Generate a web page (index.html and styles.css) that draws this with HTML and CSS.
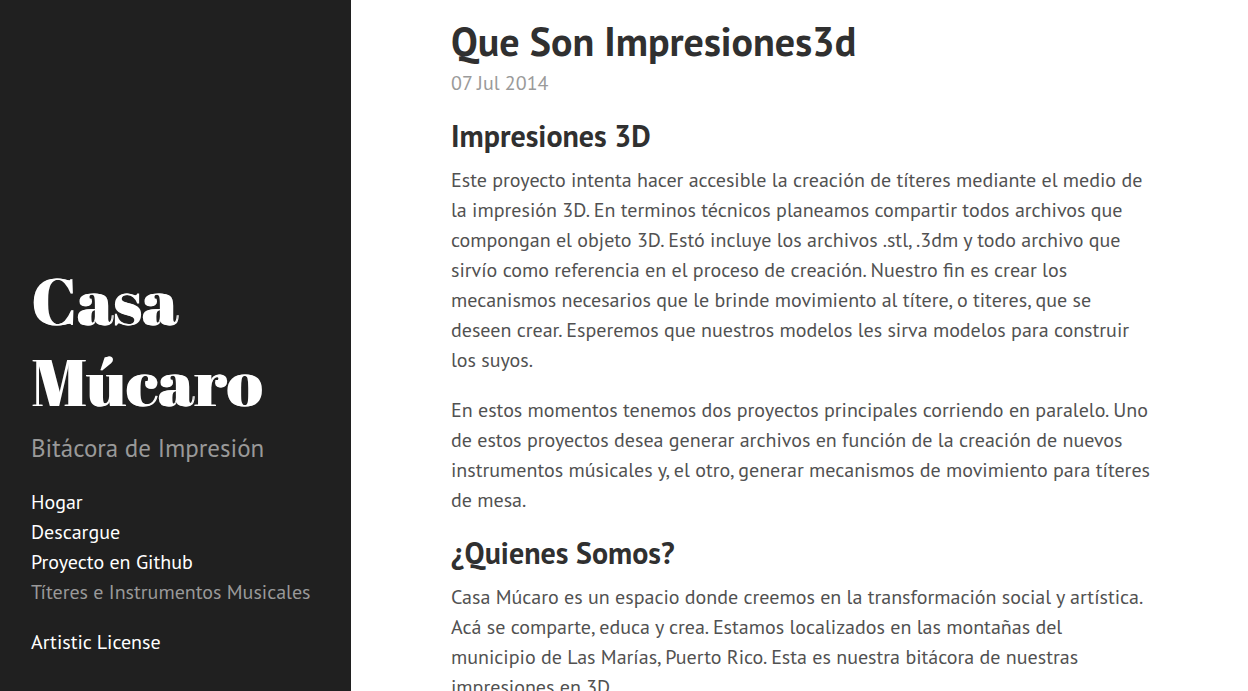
FILE: index.html
```html
<!DOCTYPE html>
<html lang="es">
<head>
<meta charset="utf-8">
<meta name="viewport" content="width=device-width, initial-scale=1">
<title>Que Son Impresiones3d</title>
<link rel="stylesheet" href="styles.css">
</head>
<body>
<aside class="sidebar">
  <div class="sidebar-about">
    <h1 class="brand"><a href="#">Casa Múcaro</a></h1>
    <p class="lead">Bitácora de Impresión</p>
  </div>
  <nav class="sidebar-nav">
    <a href="#">Hogar</a>
    <a href="#">Descargue</a>
    <a href="#">Proyecto en Github</a>
    <span>Títeres e Instrumentos Musicales</span>
  </nav>
  <p class="license"><a href="#">Artistic License</a></p>
</aside>
<main class="content">
  <article class="post">
    <h1 class="post-title">Que Son Impresiones3d</h1>
    <time class="post-date" datetime="2014-07-07">07 Jul 2014</time>
    <h2>Impresiones 3D</h2>
    <p>Este proyecto intenta hacer accesible la creación de títeres mediante el medio de
    la impresión 3D. En terminos técnicos planeamos compartir todos archivos que
    compongan el objeto 3D. Estó incluye los archivos .stl, .3dm y todo archivo que
    sirvío como referencia en el proceso de creación. Nuestro fin es crear los
    mecanismos necesarios que le brinde movimiento al títere, o titeres, que se
    deseen crear. Esperemos que nuestros modelos les sirva modelos para construir
    los suyos.</p>
    <p>En estos momentos tenemos dos proyectos principales corriendo en paralelo. Uno
    de estos proyectos desea generar archivos en función de la creación de nuevos
    instrumentos músicales y, el otro, generar mecanismos de movimiento para títeres
    de mesa.</p>
    <h2>¿Quienes Somos?</h2>
    <p>Casa Múcaro es un espacio donde creemos en la transformación social y artística.
    Acá se comparte, educa y crea. Estamos localizados en las montañas del
    municipio de Las Marías, Puerto Rico. Esta es nuestra bitácora de nuestras
    impresiones en 3D.</p>
  </article>
</main>
</body>
</html>
```
FILE: styles.css
```css
* { box-sizing: border-box; }

body {
  display: flex;
  height: 100vh;
  margin: 0;
  background: #fff;
  color: #515151;
  font-family: "PT Sans", "Noto Sans", sans-serif;
  font-size: 20px;
  line-height: 30px;
}

a { color: #fff; text-decoration: none; }
a:hover { text-decoration: underline; }

.sidebar {
  display: flex;
  flex: 0 0 351px;
  flex-direction: column;
  justify-content: flex-end;
  padding: 34px 31px;
  background: #202020;
  color: #999;
}

.brand {
  margin: 0 0 8px;
  font-family: "Abril Fatface", "DejaVu Serif", serif;
  font-size: 66px;
  font-weight: 400;
  line-height: 81px;
  text-shadow: 1px 0 #fff;
}

.lead { margin: 0 0 20px; font-size: 25px; line-height: 38px; }

.sidebar-nav {
  display: flex;
  flex-direction: column;
  margin-bottom: 20px;
  white-space: nowrap;
}

.license { margin: 0; }

.content {
  flex: 1;
  min-width: 0;
  overflow-y: auto;
  padding: 16px 20px 0 100px;
  scrollbar-width: none;
}

.post { max-width: 700px; }

.post-title {
  margin: 0 0 2px;
  color: #303030;
  font-size: 40px;
  line-height: 50px;
}

.post-date { display: block; margin-bottom: 20px; color: #9a9a9a; }

.post h2 {
  margin: 0 0 12px;
  color: #303030;
  font-size: 30px;
  line-height: 35px;
}

.post p { margin: 0 0 20px; }
```
